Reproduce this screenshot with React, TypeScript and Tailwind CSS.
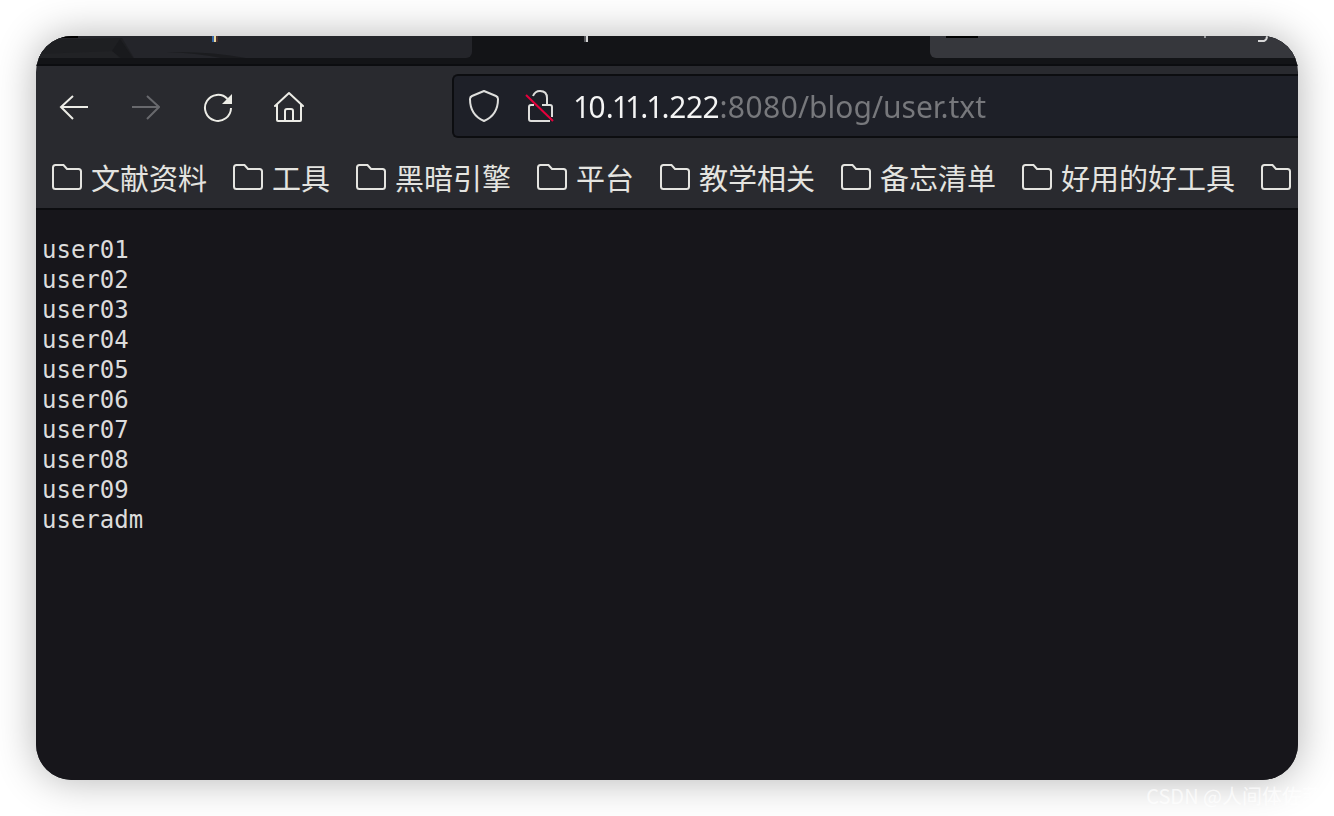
import React from "react";

const bookmarks = ["文献资料", "工具", "黑暗引擎", "平台", "教学相关", "备忘清单", "好用的好工具"];
const users = ["user01", "user02", "user03", "user04", "user05", "user06", "user07", "user08", "user09", "useradm"];

function FolderIcon() {
  return (
    <svg className="h-[26px] w-[30px] shrink-0" viewBox="0 0 30 26" fill="none" stroke="#e4e4e0" strokeWidth="2" aria-hidden="true">
      <path d="M1 3.5Q1 1 3.500 1H11.500L15 5H26.500Q29 5 29 7.500V22.500Q29 25 26.500 25H3.500Q1 25 1 22.500Z" />
    </svg>
  );
}

function TabStrip() {
  return (
    <div className="flex h-[30px] shrink-0 border-b-2 border-[#0c0d10] bg-[#131417]">
      <div className="h-[22px] w-[436px] shrink-0 overflow-hidden rounded-br-md bg-[#24252a]">
        <svg className="h-[22px] w-[240px]" viewBox="0 0 240 22" aria-hidden="true">
          <path d="M0 4L86 2L98 22H0Z" fill="#1e1f22" />
          <path d="M0 18L78 15L83 22H0Z" fill="#212225" />
          <path d="M84 3L97 22H85L76 15Z" fill="#191a1d" />
          <path d="M130 16Q175 15 210 22H185Q160 17 130 16Z" fill="#1b1c1f" />
          <path d="M20 0H42V2H20Z" fill="#000" />
          <path d="M176 0h2v6h-2z" fill="#3567a8" />
          <path d="M178 0h2v6h-2z" fill="#ead9a0" />
          <path d="M180 0h2v6h-2z" fill="#4b302e" />
        </svg>
      </div>
      <svg className="ml-28 h-[6px] w-[4px] shrink-0" viewBox="0 0 4 6" aria-hidden="true">
        <path d="M0 0h2v6H0z" fill="#55565a" />
        <path d="M2 0h2v6H2z" fill="#d4d4d4" />
      </svg>
      <div className="ml-auto h-[22px] w-[368px] shrink-0 rounded-bl-md bg-[#36373c]">
        <svg className="h-[22px] w-[368px]" viewBox="0 0 368 22" aria-hidden="true">
          <path d="M16 0h32v2H16z" fill="#000" />
          <path d="M274 0h2v2h-2z" fill="#9a9b9e" />
          <path d="M328 5H334Q337 4 337 0" fill="none" stroke="#d8d8d8" strokeWidth="2" />
        </svg>
      </div>
    </div>
  );
}

function Toolbar() {
  return (
    <div className="flex h-20 shrink-0 items-center pl-5">
      <div className="flex shrink-0 items-center gap-10">
        <button type="button" aria-label="Back" className="h-8 w-8">
          <svg viewBox="0 0 32 32" fill="none" stroke="#ecece6" strokeWidth="2" aria-hidden="true">
            <path d="M32 17H5M17 6L5 17L17 29" />
          </svg>
        </button>
        <button type="button" aria-label="Forward" disabled className="h-8 w-8">
          <svg viewBox="0 0 32 32" fill="none" stroke="#68696d" strokeWidth="2" aria-hidden="true">
            <path d="M4 17H31M19 6L31 17L19 29" />
          </svg>
        </button>
        <button type="button" aria-label="Reload" className="h-8 w-8">
          <svg viewBox="0 0 32 32" fill="none" aria-hidden="true">
            <path d="M27.500 9A13 13 0 1 0 31 18" stroke="#ecece6" strokeWidth="2" />
            <path d="M32 4V14H22Z" fill="#ecece6" />
          </svg>
        </button>
        <button type="button" aria-label="Home" className="h-8 w-8">
          <svg viewBox="0 0 32 32" fill="none" stroke="#ecece6" strokeWidth="2" strokeLinejoin="round" strokeLinecap="round" aria-hidden="true">
            <path d="M3 16L17 3L31 16M5 15V30Q5 31 6 31H28Q29 31 29 30V15M13 31V21Q13 19 15 19H19Q21 19 21 21V31" />
          </svg>
        </button>
      </div>
      <div className="ml-[148px] flex h-16 min-w-0 flex-1 items-center rounded-l-md border-2 border-r-0 border-[#0c0d10] bg-[#1e2028] pl-[15px]">
        <svg className="h-8 w-8 shrink-0" viewBox="0 0 32 32" fill="none" stroke="#dededc" strokeWidth="2" strokeLinejoin="round" aria-hidden="true">
          <path d="M15 1L27 6Q29 7 29 9Q29 25 15 31Q1 25 1 9Q1 7 3 6Z" />
        </svg>
        <svg className="ml-6 h-8 w-8 shrink-0" viewBox="0 0 32 32" fill="none" aria-hidden="true">
          <path d="M8 6Q10 1 15 1Q22 1 22 8V15M9 15H6Q4 15 4 17V29Q4 31 6 31H25M17 15H25Q27 15 27 17V27" stroke="#dededc" strokeWidth="2" />
          <path d="M1 5L28 31" stroke="#e5003c" strokeWidth="2" />
        </svg>
        <input
          type="text"
          aria-label="Address"
          defaultValue="10.11.1.222:8080/blog/user.txt"
          className="ml-[18px] h-12 min-w-0 flex-1 bg-[linear-gradient(to_right,#f4f4f4_144px,#77787c_144px)] bg-clip-text font-['Noto_Sans',sans-serif] text-[30px] proportional-nums text-transparent outline-none"
        />
      </div>
    </div>
  );
}

function BookmarksBar() {
  return (
    <nav aria-label="Bookmarks" className="flex h-16 shrink-0 gap-[26px] overflow-hidden border-b-2 border-[#0c0d10] pl-4 pt-2">
      {bookmarks.map((name) => (
        <a key={name} href="#" className="flex h-[46px] shrink-0 items-center gap-[9px] whitespace-nowrap font-['Noto_Sans_CJK_SC',sans-serif] text-[29px] leading-10 text-[#e4e4e0]">
          <FolderIcon />
          <span>{name}</span>
        </a>
      ))}
      <a href="#" aria-label="More bookmarks" className="flex h-[46px] shrink-0 items-center">
        <FolderIcon />
      </a>
    </nav>
  );
}

export default function App() {
  return (
    <div className="relative flex min-h-screen flex-col bg-white p-9">
      <div className="flex flex-1 flex-col overflow-hidden rounded-[36px] bg-[#292a2f] shadow-[0_0_40px_rgba(0,0,0,0.3)]">
        <TabStrip />
        <Toolbar />
        <BookmarksBar />
        <main className="flex-1 bg-[#17161b] px-[6px] py-[25px]">
          <pre className="font-['DejaVu_Sans_Mono',monospace] text-[24px] leading-[30px] text-[#dcdcdc]">{users.join("\n")}</pre>
        </main>
      </div>
      <div className="absolute bottom-1 right-3 whitespace-nowrap font-['Noto_Sans_CJK_SC',sans-serif] text-[20px] leading-8 text-white/70">
        CSDN @人间体佐菲
      </div>
    </div>
  );
}
